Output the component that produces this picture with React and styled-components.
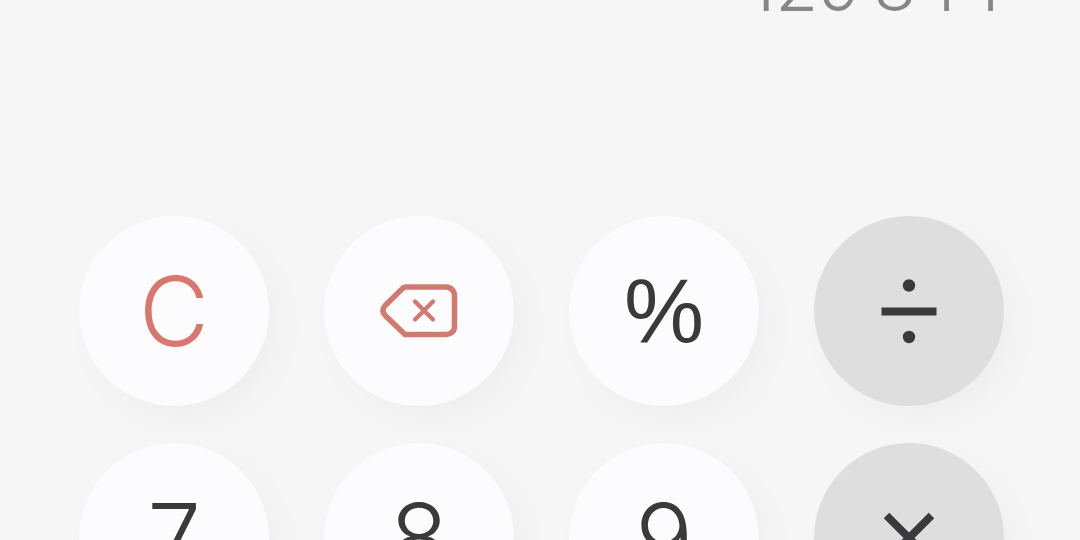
import React, { useState } from 'react';
import styled, { createGlobalStyle } from 'styled-components';

const GlobalStyle = createGlobalStyle`
  * {
    box-sizing: border-box;
  }
  body {
    margin: 0;
    background-color: #f6f6f6;
    font-family: Inter, 'Liberation Sans', sans-serif;
  }
`;

const Calculator = styled.main`
  height: 100vh;
  overflow: hidden;
  padding: 0 76px 0 79px;
`;

const Display = styled.div`
  display: flex;
  justify-content: flex-end;
  align-items: flex-end;
  height: 26px;
  margin-bottom: 190px;
`;

const Result = styled.output`
  color: #868686;
  font-size: 70px;
  font-weight: 300;
  line-height: 80px;
`;

const Keypad = styled.div`
  display: grid;
  grid-template-columns: repeat(4, 1fr);
  gap: 37px 55px;
`;

const Key = styled.button`
  display: flex;
  justify-content: center;
  align-items: center;
  aspect-ratio: 1;
  padding: 0;
  border: none;
  border-radius: 50%;
  background-color: ${({ $operator }) => ($operator ? '#dedede' : '#fcfcfe')};
  box-shadow: 12px 14px 32px rgba(0, 0, 0, 0.03);
  color: ${({ $danger }) => ($danger ? '#d9776e' : '#3a3a3c')};
  font-family: ${({ $small }) => ($small ? "'Liberation Sans', sans-serif" : 'inherit')};
  font-size: ${({ $small }) => ($small ? '90px' : '96px')};
  font-weight: 300;
  line-height: 1;
  cursor: pointer;
`;

const BackspaceIcon = () => (
  <svg width="78" height="54" viewBox="0 0 78 54" fill="none" stroke="#d27a72" aria-hidden="true">
    <path d="M25 3H66a8.500 8.500 0 0 1 8.500 8.500V42.500A8 8 0 0 1 66 50.500H25L5.200 31.500Q0.600 26.500 5.200 21.500L23 4Q24 3 26 3Z" strokeWidth="5.500" />
    <path d="M35 17.500 53 35.500M53 17.500 35 35.500" strokeWidth="4.300" strokeLinecap="round" />
  </svg>
);

const DivideIcon = () => (
  <svg width="56" height="66" viewBox="0 0 56 66" fill="currentColor" aria-hidden="true">
    <circle cx="28" cy="7.500" r="6.200" />
    <rect x="0.500" y="29.500" width="55" height="8" />
    <circle cx="28" cy="59" r="6.200" />
  </svg>
);

const MultiplyIcon = () => (
  <svg width="52" height="52" viewBox="0 0 52 52" stroke="currentColor" strokeWidth="7.800" aria-hidden="true">
    <path d="M3.500 3.500 48.500 48.500M48.500 3.500 3.500 48.500" />
  </svg>
);

const keys = [
  { name: 'clear', label: 'C', danger: true },
  { name: 'backspace', label: <BackspaceIcon />, danger: true },
  { name: 'percent', label: '%', small: true },
  { name: 'divide', label: <DivideIcon />, operator: true },
  { name: '7', label: '7' },
  { name: '8', label: '8' },
  { name: '9', label: '9' },
  { name: 'multiply', label: <MultiplyIcon />, operator: true },
];

const formatNumber = (value) => value.replace(/\B(?=(\d{3})+$)/g, '\u2009');

const App = () => {
  const [value, setValue] = useState('129844');

  const handlePress = (name) => {
    if (name === 'clear') setValue('0');
    else if (name === 'backspace') setValue(value.slice(0, -1) || '0');
    else if (/^\d$/.test(name)) setValue(value === '0' ? name : value + name);
  };

  return (
    <Calculator>
      <GlobalStyle />
      <Display>
        <Result>{formatNumber(value)}</Result>
      </Display>
      <Keypad>
        {keys.map(({ name, label, danger, operator, small }) => (
          <Key
            key={name}
            type="button"
            aria-label={name}
            $danger={danger}
            $operator={operator}
            $small={small}
            onClick={() => handlePress(name)}
          >
            {label}
          </Key>
        ))}
      </Keypad>
    </Calculator>
  );
};

export default App;
